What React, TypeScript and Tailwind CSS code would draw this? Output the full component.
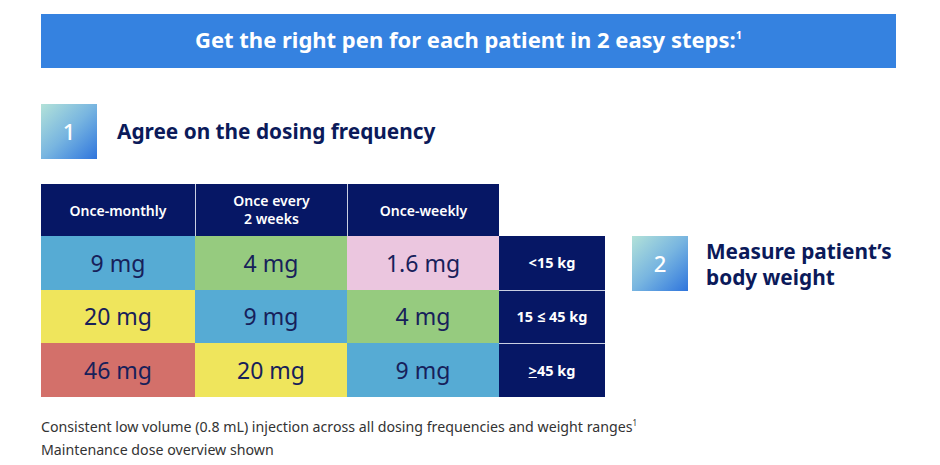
import React from "react";

const font = { fontFamily: '"Noto Sans", "Open Sans", sans-serif' };

function StepBox({ n }: { n: string }) {
  return (
    <div className="flex h-[55px] w-[56px] shrink-0 items-center justify-center bg-gradient-to-br from-[#b3e2d8] via-[#78b5e0] to-[#2f74dc] text-[22px] font-medium text-white">
      {n}
    </div>
  );
}

const rows = [
  { cells: [["9 mg", "bg-[#56abd4]"], ["4 mg", "bg-[#96cb7f]"], ["1.6 mg", "bg-[#ebc6df]"]], w: <>&lt;15 kg</>, h: "h-[54px]" },
  { cells: [["20 mg", "bg-[#efe55c]"], ["9 mg", "bg-[#56abd4]"], ["4 mg", "bg-[#96cb7f]"]], w: <>15 ≤ 45 kg</>, h: "h-[53px]" },
  { cells: [["46 mg", "bg-[#d3706a]"], ["20 mg", "bg-[#efe55c]"], ["9 mg", "bg-[#56abd4]"]], w: <><span className="underline">&gt;</span>45 kg</>, h: "h-[54px]" },
];

export default function App() {
  return (
    <div className="h-[465px] w-[940px] bg-white px-[41px] pt-[14px]" style={font}>
      <div className="flex h-[54px] w-[855px] items-center justify-center bg-[#3582e0] pb-[4px] text-[22px] font-bold leading-[28px] text-white">
        <span>
          Get the right pen for each patient in 2 easy steps:
          <span className="relative -top-[9px] text-[11px] leading-none">1</span>
        </span>
      </div>

      <div className="mt-[36px] flex items-center gap-[20px]">
        <StepBox n="1" />
        <div className="text-[20.8px] font-bold text-[#0b1a5a]">Agree on the dosing frequency</div>
      </div>

      <div className="mt-[25px] flex items-start">
        <div className="flex flex-col">
          <div className="flex h-[52px]">
            <div className="flex w-[154px] items-center justify-center bg-[#061765] text-[14px] font-semibold text-white">Once-monthly</div>
            <div className="flex w-[152px] flex-col items-center justify-center border-l border-[#c9cfe2] bg-[#061765] text-center text-[14px] font-semibold leading-[18px] text-white">
              <span>Once every</span>
              <span>2 weeks</span>
            </div>
            <div className="flex w-[152px] items-center justify-center border-l border-[#c9cfe2] bg-[#061765] text-[14px] font-semibold text-white">Once-weekly</div>
          </div>
          {rows.map((r, i) => (
            <div key={i} className={`flex ${r.h}`}>
              {r.cells.map(([t, c], j) => (
                <div
                  key={j}
                  className={`flex ${j === 0 ? "w-[154px]" : "w-[152px]"} items-center justify-center ${c} text-[23px] text-[#17205a]`}
                >
                  {t}
                </div>
              ))}
              <div
                className={`flex w-[106px] items-center justify-center bg-[#061765] text-[14.5px] font-bold text-white ${i > 0 ? "border-t border-[#c9cfe2]" : ""}`}
              >
                {r.w}
              </div>
            </div>
          ))}
        </div>

        <div className="ml-[27px] mt-[52px] flex items-center gap-[18px]">
          <StepBox n="2" />
          <div className="text-[20.8px] font-bold leading-[26px] text-[#0b1a5a]">
            Measure patient’s
            <br />
            body weight
          </div>
        </div>
      </div>

      <div className="mt-[18px] text-[14.2px] leading-[23px] text-[#333333]">
        <div>
          Consistent low volume (0.8 mL) injection across all dosing frequencies and weight ranges
          <span className="relative -top-[6px] text-[8px] leading-none">1</span>
        </div>
        <div>Maintenance dose overview shown</div>
      </div>
    </div>
  );
}
